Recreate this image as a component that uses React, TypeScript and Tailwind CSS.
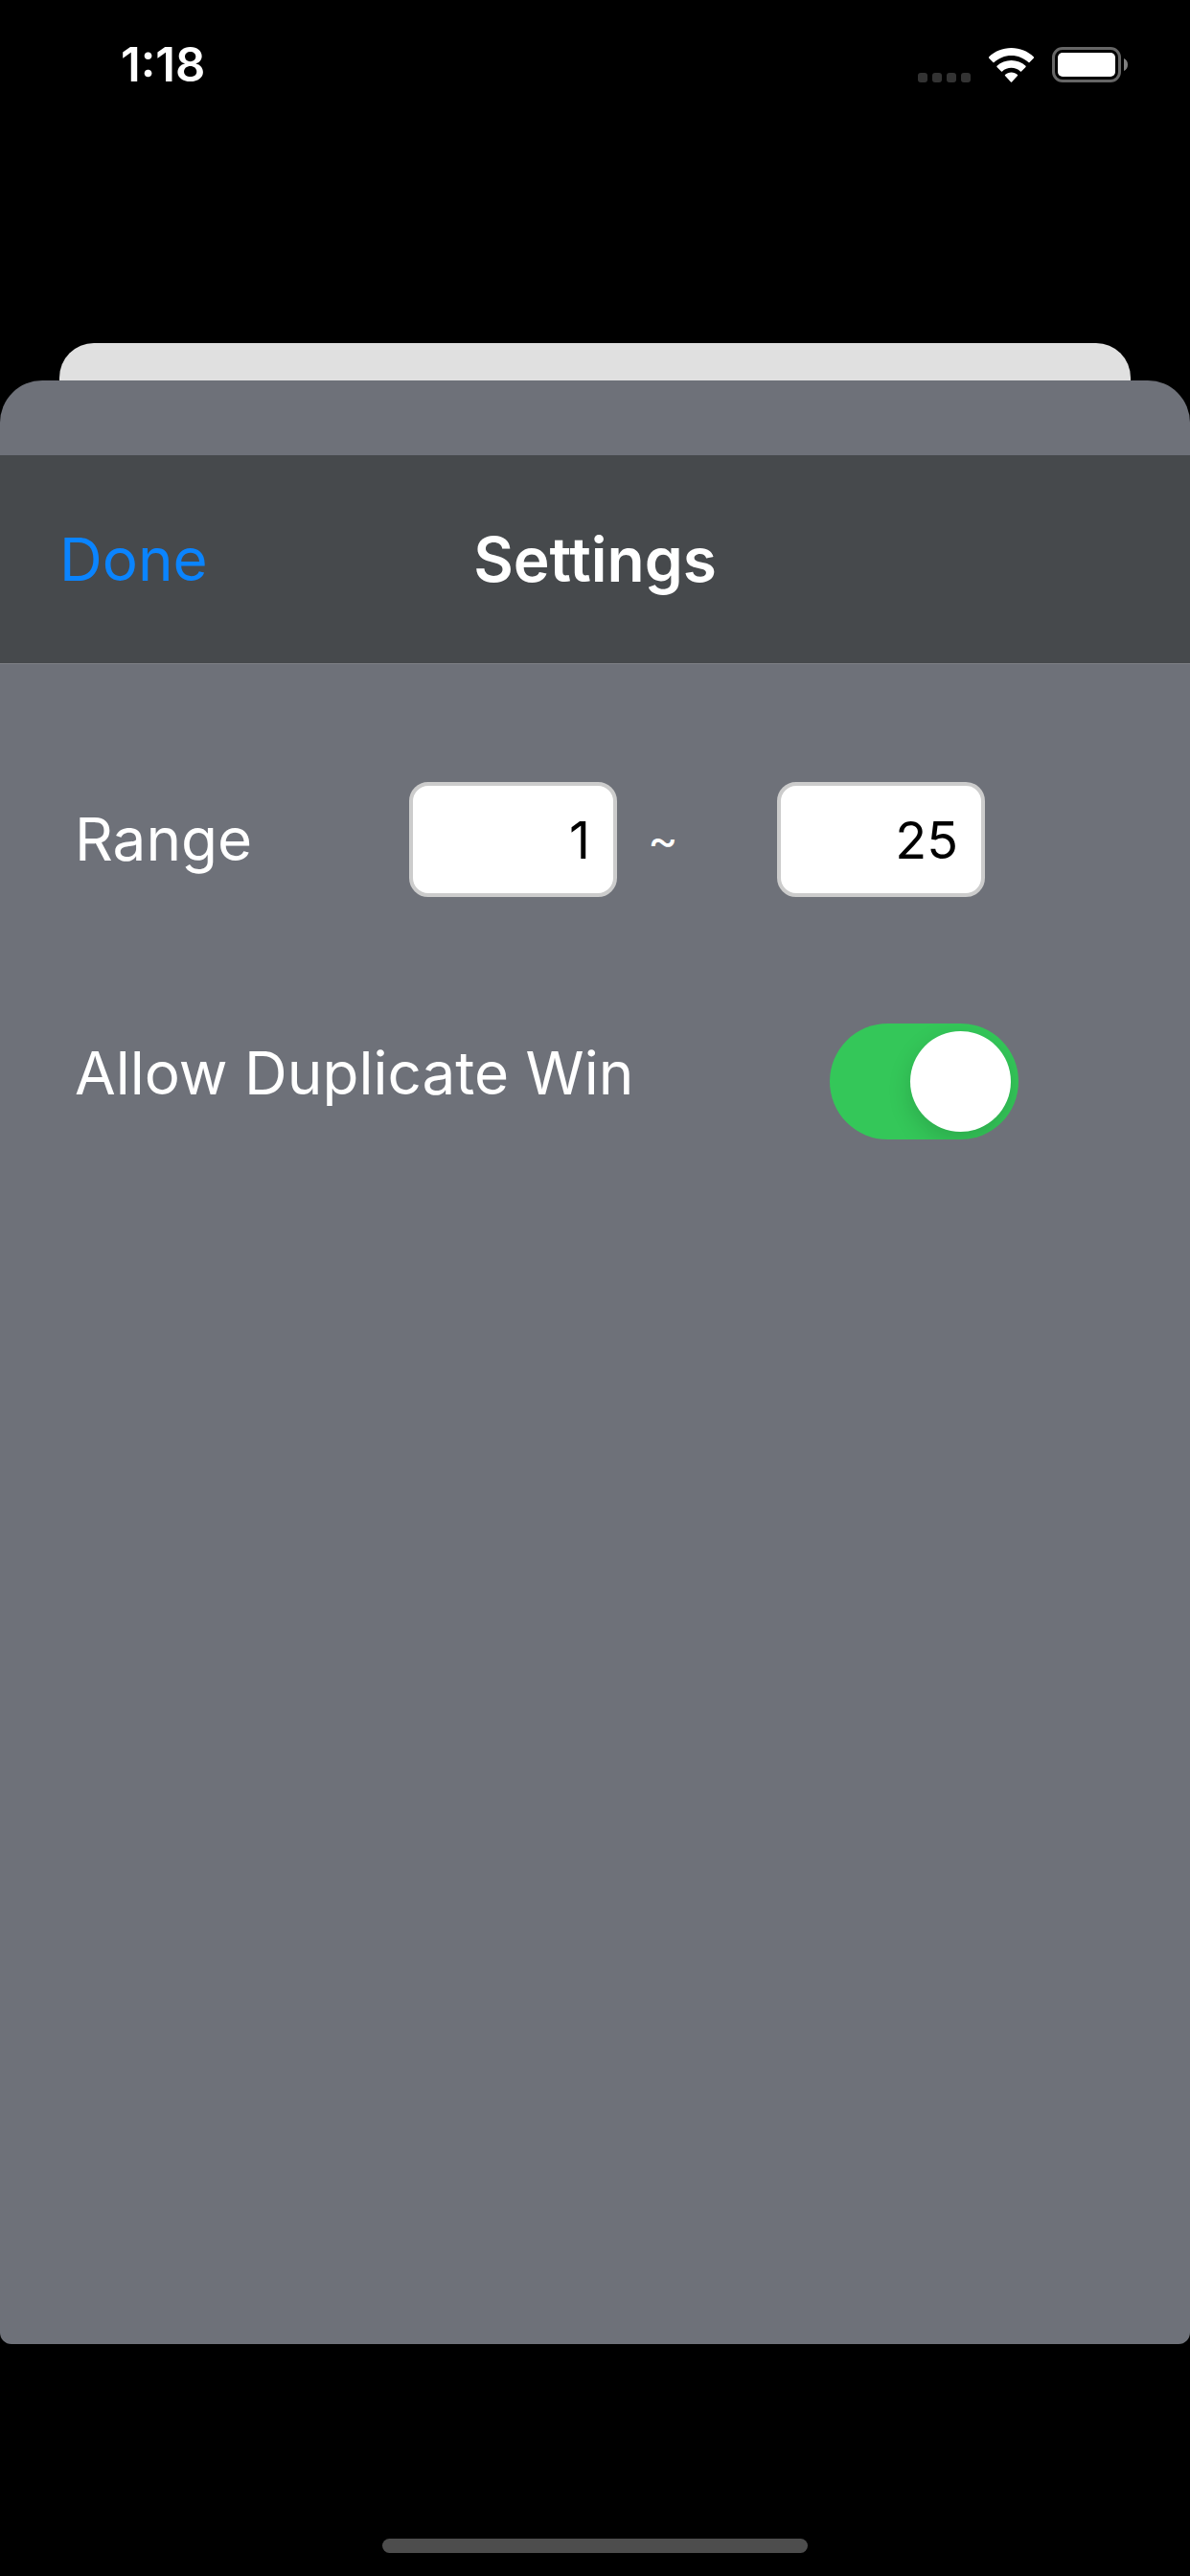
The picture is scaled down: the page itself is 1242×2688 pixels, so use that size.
import { useState } from 'react';

function StatusBar() {
  return (
    <header className="flex items-start justify-between pt-9 pr-16 pl-[126px] text-white">
      <time className="text-[49px] leading-[64px] font-semibold">1:18</time>
      <div className="flex items-end gap-[19px] pt-[13px]">
        <div className="flex gap-[5px]">
          <span className="size-[10px] rounded-[3px] bg-[#333333]" />
          <span className="size-[10px] rounded-[3px] bg-[#333333]" />
          <span className="size-[10px] rounded-[3px] bg-[#333333]" />
          <span className="size-[10px] rounded-[3px] bg-[#333333]" />
        </div>
        <svg width="47" height="36" viewBox="0 0 47 36" fill="currentColor" aria-hidden="true">
          <path d="M23.5 0C32.5 0 40.8 3.5 47 9.4Q47.4 10 47 10.5L42.6 15Q42 15.5 41.4 15C36.7 10.6 30.4 7.9 23.5 7.9S10.3 10.6 5.600 15Q5 15.5 4.4 15L0 10.5Q-.4 10 0 9.4C6.2 3.5 14.5 0 23.5 0Z" />
          <path d="M23.5 13C29.2 13 34.5 15.2 38.5 18.8Q39 19.3 38.5 19.9L34 24.4Q33.500 24.900 32.900 24.400C30.400 22.200 27.100 20.800 23.500 20.800S16.600 22.200 14.100 24.400Q13.500 24.900 13 24.400L8.500 19.900Q8 19.300 8.500 18.800C12.500 15.200 17.800 13 23.500 13Z" />
          <path d="M23.5 25.6C26 25.6 28.3 26.5 30 28Q30.5 28.5 30 29.1L24.1 35.4Q23.5 36 22.9 35.4L17 29.1Q16.5 28.5 17 28C18.7 26.5 21 25.6 23.5 25.6Z" />
        </svg>
        <svg width="80" height="37" viewBox="0 0 80 37" aria-hidden="true">
          <rect x="1.5" y="1.5" width="69" height="34" rx="9.5" fill="none" stroke="#666666" strokeWidth="3" />
          <rect x="6" y="6" width="60" height="25" rx="5" fill="#ffffff" />
          <path d="M75 12C77.5 13 79 15.5 79 18.5S77.5 24 75 25Z" fill="#808080" />
        </svg>
      </div>
    </header>
  );
}

function NumberField({ label, value, onChange }: { label: string; value: string; onChange: (v: string) => void }) {
  return (
    <input
      type="text"
      inputMode="numeric"
      aria-label={label}
      value={value}
      onChange={(e) => onChange(e.target.value)}
      className="h-[120px] w-[217px] rounded-[20px] border-4 border-[#cccccc] bg-white pr-6 text-right text-[54px] text-black"
    />
  );
}

export default function App() {
  const [from, setFrom] = useState('1');
  const [to, setTo] = useState('25');
  const [allowDuplicate, setAllowDuplicate] = useState(true);

  return (
    <div className="flex min-h-screen flex-col bg-black font-[Inter,sans-serif]">
      <StatusBar />

      <div className="mx-[62px] mt-[258px] h-[39px] rounded-t-[36px] bg-[#e0e0e0]" />

      <main className="flex-1 rounded-t-[44px] rounded-b-[12px] bg-[#6e7179] pt-[78px] text-white">
        <nav className="grid h-[218px] grid-cols-[1fr_auto_1fr] items-center border-b border-[#7f8186] bg-[#46494c] px-[62px]">
          <button
            type="button"
            className="justify-self-start text-[62px] leading-[80px] text-[#0a84ff]"
          >
            Done
          </button>
          <h1 className="text-[64px] leading-[80px] font-semibold">Settings</h1>
        </nav>

        <div className="flex flex-col gap-[132px] px-[78px] pt-[123px]">
          <div className="flex items-center">
            <span className="w-[349px] text-[62px] leading-[80px]">Range</span>
            <NumberField label="Range from" value={from} onChange={setFrom} />
            <span className="w-[167px] pl-8 text-[48px] leading-[64px]">~</span>
            <NumberField label="Range to" value={to} onChange={setTo} />
          </div>

          <label className="flex items-start">
            <span className="w-[788px] pt-3 text-[62px] leading-[80px]">Allow Duplicate Win</span>
            <input
              type="checkbox"
              role="switch"
              checked={allowDuplicate}
              onChange={(e) => setAllowDuplicate(e.target.checked)}
              className="peer sr-only"
            />
            <span className="flex h-[121px] w-[197px] items-center overflow-hidden rounded-full bg-[#8e8e93] p-2 peer-checked:justify-end peer-checked:bg-[#34c759]">
              <span className="size-[105px] rounded-full bg-white shadow-[0_9px_24px_rgba(0,0,0,0.15)]" />
            </span>
          </label>
        </div>
      </main>

      <footer className="flex h-[242px] items-end justify-center pb-6">
        <div className="h-[15px] w-[444px] rounded-full bg-[#4d4d4d]" />
      </footer>
    </div>
  );
}
